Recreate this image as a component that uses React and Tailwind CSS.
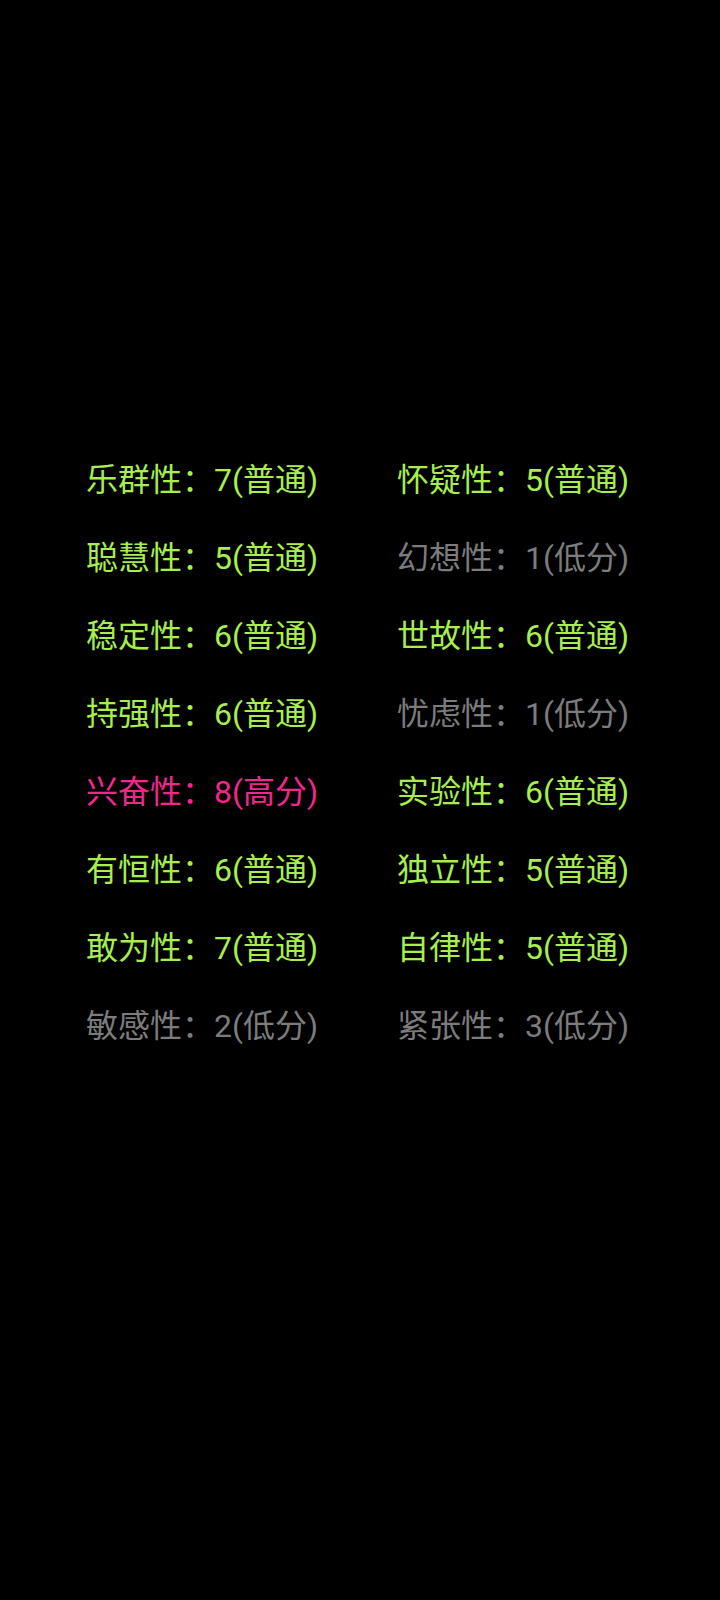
import React from 'react'

const items = [
  ['乐群性', 7, '普通'], ['怀疑性', 5, '普通'],
  ['聪慧性', 5, '普通'], ['幻想性', 1, '低分'],
  ['稳定性', 6, '普通'], ['世故性', 6, '普通'],
  ['持强性', 6, '普通'], ['忧虑性', 1, '低分'],
  ['兴奋性', 8, '高分'], ['实验性', 6, '普通'],
  ['有恒性', 6, '普通'], ['独立性', 5, '普通'],
  ['敢为性', 7, '普通'], ['自律性', 5, '普通'],
  ['敏感性', 2, '低分'], ['紧张性', 3, '低分'],
]

const colorOf = (level) => {
  if (level === '高分') return 'text-[#f0288c]'
  if (level === '低分') return 'text-[#7c7c7c]'
  return 'text-[#a6ef4e]'
}

const App = () => {
  return (
    <div className='min-h-[1600px] bg-black pt-[441px] pl-[86px]' style={{ fontFamily: 'Roboto, "Noto Sans CJK SC", sans-serif' }}>
      <div className='grid grid-cols-[311px_1fr]'>
        {items.map(([name, score, level]) => (
          <div key={name} className={'text-[32px] leading-[78px] whitespace-nowrap ' + colorOf(level)}>
            {name}：{score}({level})
          </div>
        ))}
      </div>
    </div>
  )
}

export default App
